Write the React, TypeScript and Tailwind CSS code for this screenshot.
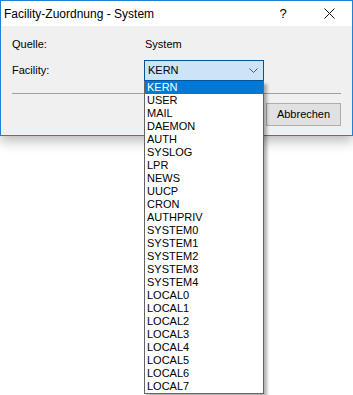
import React from "react";

const items = [
  "KERN","USER","MAIL","DAEMON","AUTH","SYSLOG","LPR","NEWS","UUCP","CRON","AUTHPRIV",
  "SYSTEM0","SYSTEM1","SYSTEM2","SYSTEM3","SYSTEM4",
  "LOCAL0","LOCAL1","LOCAL2","LOCAL3","LOCAL4","LOCAL5","LOCAL6","LOCAL7",
];

export default function App() {
  return (
    <div className="relative w-[353px] h-[395px] bg-white overflow-hidden text-black" style={{ fontFamily: '"Liberation Sans", Arial, sans-serif' }}>
      <div className="w-[353px] h-[136px] border border-[#1f80d6] bg-[#f0f0f0] shadow-[0_5px_12px_rgba(0,0,0,0.28)] flex flex-col">
        <div className="h-[25px] bg-white flex items-center">
          <span className="pl-[3px] text-[12px]">Facility-Zuordnung - System</span>
          <div className="ml-auto flex h-full">
            <div className="w-[46px] h-full flex items-center justify-center text-[13px]">?</div>
            <div className="w-[46px] h-full flex items-center justify-center">
              <svg width="11" height="11" viewBox="0 0 11 11">
                <path d="M0.5 0.5 L10.5 10.5 M10.5 0.5 L0.5 10.5" stroke="#111" strokeWidth="1" fill="none" />
              </svg>
            </div>
          </div>
        </div>
        <div className="flex flex-col px-[11px] pt-[10px] text-[11px]">
          <div className="flex items-center h-[16px]">
            <span className="w-[132px]">Quelle:</span>
            <span className="pl-[1px]">System</span>
          </div>
          <div className="flex items-center mt-[8px] h-[21px]">
            <span className="w-[132px]">Facility:</span>
            <div className="w-[120px] h-[21px] border border-[#005499] bg-[#cce4f7] flex items-center pl-[3px] pr-[5px]">
              <span className="text-[11px]">KERN</span>
              <svg className="ml-auto" width="9" height="5" viewBox="0 0 9 5">
                <path d="M0.5 0.5 L4.5 4.5 L8.5 0.5" stroke="#555" strokeWidth="1" fill="none" />
              </svg>
            </div>
          </div>
          <div className="mt-[12px] h-px bg-[#a0a0a0]" />
          <div className="flex justify-end mt-[9px]">
            <div className="w-[75px] h-[23px] border border-[#adadad] bg-[#e1e1e1] flex items-center justify-center">Abbrechen</div>
          </div>
        </div>
      </div>
      <div className="absolute left-[144px] top-[81px] w-[120px] border-x border-b border-[#646464] bg-white shadow-[3px_3px_3px_rgba(0,0,0,0.3)] text-[11px]">
        {items.map((it, i) => (
          <div key={it} className={i === 0 ? "h-[13px] leading-[13px] pl-[2px] bg-[#0078d7] text-white" : "h-[13px] leading-[13px] pl-[2px]"}>
            {it}
          </div>
        ))}
      </div>
    </div>
  );
}
